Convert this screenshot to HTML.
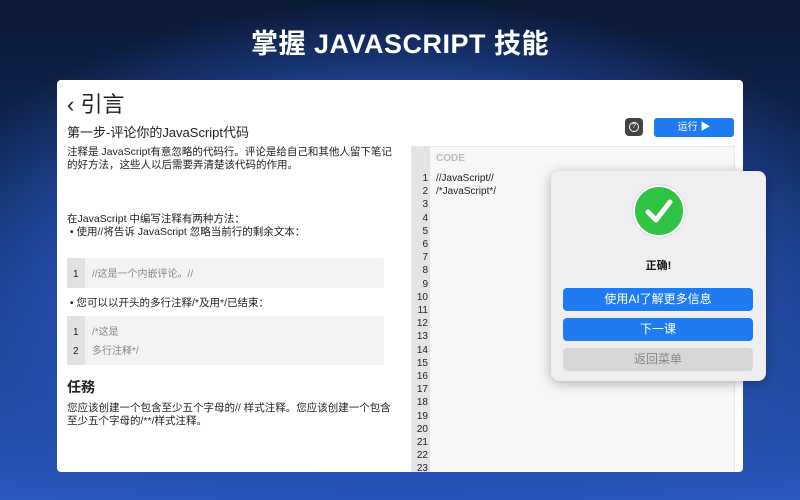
<!DOCTYPE html>
<html><head><meta charset="utf-8"><style>
*{margin:0;padding:0;box-sizing:border-box}
body{width:800px;height:500px;overflow:hidden;position:relative;font-family:"Liberation Sans","Noto Sans CJK SC",sans-serif;
background:radial-gradient(ellipse 520px 300px at 400px 300px,#2f64d0 0%,#2553b5 55%,rgba(20,40,100,0) 100%),linear-gradient(#0b1834 0%,#112a5c 45%,#2a58bd 100%);}
.t{position:absolute;top:22px;width:800px;text-align:center;color:#fff;font-size:27px;font-weight:bold;letter-spacing:0.5px}
.win{position:absolute;left:57px;top:80px;width:686px;height:392px;background:#fff;border-radius:4px;overflow:hidden}
.a{position:absolute;color:#222}
.cb{position:absolute;left:10px;width:317px;background:#f3f3f3;border-radius:3px}
.cb .g{position:absolute;left:0;top:0;bottom:0;width:18px;background:#e2e2e2}
.cb div.l{position:absolute;font-size:10px;line-height:12px;color:#888}
.cb div.n{position:absolute;left:6px;font-size:10px;line-height:12px;color:#222}
.code{position:absolute;left:354px;top:66px;width:324px;height:330px;background:#f7f7f8;border:1px solid #e8e8e8}
.code .g{position:absolute;left:0;top:0;bottom:0;width:18px;background:#e4e4e6}
.ln{position:absolute;left:0;width:16px;text-align:right;font-size:10px;color:#222}
.btn{position:absolute;left:12px;width:190px;height:23px;border-radius:4px;background:#1f7bf2;color:#fff;font-size:12px;text-align:center;line-height:23px}
</style></head><body>
<div class="t">掌握 JAVASCRIPT 技能</div>
<div class="win">
<div class="a" style="left:10px;top:7px;font-size:22px">‹ 引言</div>
<div class="a" style="left:10px;top:42px;font-size:13px">第一步-评论你的JavaScript代码</div>
<div class="a" style="left:10px;top:66px;font-size:10.5px;line-height:13px;width:334px">注释是 JavaScript有意忽略的代码行。评论是给自己和其他人留下笔记的好方法，这些人以后需要弄清楚该代码的作用。</div>
<div class="a" style="left:10px;top:133px;font-size:10.5px;line-height:13px">在JavaScript 中编写注释有两种方法：<br>&nbsp;• 使用//将告诉 JavaScript 忽略当前行的剩余文本：</div>
<div class="cb" style="top:178px;height:30px"><div class="g"></div><div class="n" style="top:11px">1</div><div class="l" style="left:25px;top:11px">//这是一个内嵌评论。//</div></div>
<div class="a" style="left:10px;top:215px;font-size:10.5px">&nbsp;• 您可以以开头的多行注释/*及用*/已结束：</div>
<div class="cb" style="top:236px;height:49px"><div class="g"></div><div class="n" style="top:11px">1</div><div class="l" style="left:25px;top:11px">/*这是</div><div class="n" style="top:30px">2</div><div class="l" style="left:25px;top:30px">多行注释*/</div></div>
<div class="a" style="left:10px;top:297px;font-size:14px;font-weight:bold">任務</div>
<div class="a" style="left:10px;top:322px;font-size:10.5px;line-height:13px;width:334px">您应该创建一个包含至少五个字母的// 样式注释。您应该创建一个包含至少五个字母的/**/样式注释。</div>
<div style="position:absolute;left:568px;top:38px;width:18px;height:18px;background:#444;border-radius:4px"><div style="position:absolute;left:4px;top:4px;width:10px;height:10px;border:1px solid #fff;border-radius:50%;color:#fff;font-size:7px;line-height:8px;text-align:center">?</div></div>
<div style="position:absolute;left:597px;top:38px;width:80px;height:19px;background:#1f7bf2;border-radius:3px;color:#fff;font-size:10px;text-align:center;line-height:19px">运行 ▶</div>
<div class="code"><div class="g"></div>
<div style="position:absolute;left:24px;top:6px;font-size:10px;font-weight:bold;color:#bbb">CODE</div>
<div style="position:absolute;left:24px;top:25px;font-size:10px;line-height:13.2px;color:#222">//JavaScript//<br>/*JavaScript*/</div>
<div class="ln" style="top:25px;line-height:13.2px">1<br>2<br>3<br>4<br>5<br>6<br>7<br>8<br>9<br>10<br>11<br>12<br>13<br>14<br>15<br>16<br>17<br>18<br>19<br>20<br>21<br>22<br>23</div>
</div>
</div>
<div style="position:absolute;left:551px;top:171px;width:215px;height:210px;background:#efeff2;border-radius:8px;box-shadow:0 2px 12px rgba(0,0,0,.3)">
<div style="position:absolute;left:82px;top:14px;width:52px;height:52px;border-radius:50%;background:#2fc443;border:2px solid #fff;box-shadow:0 0 2px rgba(0,0,0,.2)">
<svg width="48" height="48" viewBox="0 0 48 48"><path d="M13 25 L21 33 L35 15" stroke="#fff" stroke-width="5" fill="none" stroke-linecap="round" stroke-linejoin="round"/></svg></div>
<div style="position:absolute;left:0;width:215px;top:86px;text-align:center;font-size:11px;font-weight:bold;color:#111">正确!</div>
<div class="btn" style="top:117px">使用AI了解更多信息</div>
<div class="btn" style="top:147px">下一课</div>
<div class="btn" style="top:177px;background:#d7d7d9;color:#888">返回菜单</div>
</div>
</body></html>
